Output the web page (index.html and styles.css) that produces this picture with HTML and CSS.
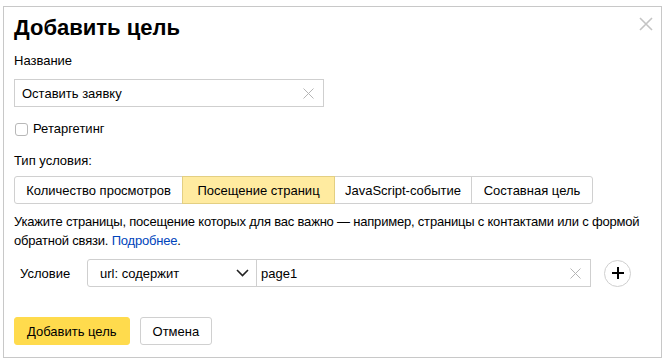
FILE: index.html
```html
<!DOCTYPE html>
<html lang="ru">
<head>
    <meta charset="UTF-8">
    <title>Добавить цель</title>
    <link rel="stylesheet" href="styles.css">
</head>
<body>
    <div class="dialog">
        <button class="close" type="button" aria-label="Закрыть">
            <svg width="14" height="14" viewBox="0 0 14 14"><path d="M1 1L13 13M13 1L1 13" stroke="#c4c4c4" stroke-width="1.6" fill="none"/></svg>
        </button>

        <h2 class="title">Добавить цель</h2>

        <div class="label">Название</div>
        <div class="textinput name-input">
            <span class="value">Оставить заявку</span>
            <svg class="clear" width="11" height="11" viewBox="0 0 11 11"><path d="M0.5 0.5L10.5 10.5M10.5 0.5L0.5 10.5" stroke="#b5b5b5" stroke-width="1" fill="none"/></svg>
        </div>

        <label class="check-row">
            <span class="checkbox"></span>
            <span>Ретаргетинг</span>
        </label>

        <div class="label type-label">Тип условия:</div>
        <div class="segments">
            <span class="seg seg-first">Количество просмотров</span>
            <span class="seg seg-active">Посещение страниц</span>
            <span class="seg">JavaScript-событие</span>
            <span class="seg seg-last">Составная цель</span>
        </div>

        <p class="hint">Укажите страницы, посещение которых для вас важно — например, страницы с контактами или с формой обратной связи. <a href="#">Подробнее</a>.</p>

        <div class="condition">
            <span class="cond-label">Условие</span>
            <div class="select">
                <span>url: содержит</span>
                <svg width="13" height="8" viewBox="0 0 13 8"><path d="M1 1L6.5 6.5L12 1" stroke="#222" stroke-width="1.6" fill="none"/></svg>
            </div>
            <div class="textinput cond-input">
                <span class="value">page1</span>
                <svg class="clear" width="11" height="11" viewBox="0 0 11 11"><path d="M0.5 0.5L10.5 10.5M10.5 0.5L0.5 10.5" stroke="#b5b5b5" stroke-width="1" fill="none"/></svg>
            </div>
            <button class="plus" type="button" aria-label="Добавить">
                <svg width="12" height="12" viewBox="0 0 12 12"><path d="M6 0V12M0 6H12" stroke="#000" stroke-width="2" fill="none"/></svg>
            </button>
        </div>

        <div class="footer">
            <button class="btn btn-action" type="button">Добавить цель</button>
            <button class="btn" type="button">Отмена</button>
        </div>
    </div>
</body>
</html>
```

FILE: styles.css
```css
body {
    margin: 0;
    padding: 6px 0 0 3px;
    font-family: 'Liberation Sans', Arial, sans-serif;
    font-size: 13px;
    color: #000;
    background: #fff;
}

.dialog {
    position: relative;
    box-sizing: border-box;
    width: 659px;
    height: 352px;
    border: 1px solid #c8c8c8;
    padding: 8px 8px 0 10px;
}

.close {
    position: absolute;
    top: 10px;
    right: 8px;
    width: 14px;
    height: 14px;
    padding: 0;
    border: 0;
    background: none;
    display: flex;
}

.title {
    margin: 0;
    font-size: 22px;
    line-height: 26px;
    font-weight: bold;
}

.label {
    margin-top: 12px;
    line-height: 16px;
}

.textinput {
    box-sizing: border-box;
    height: 28px;
    border: 1px solid #cfcfcf;
    display: flex;
    align-items: center;
    padding: 0 9px 0 7px;
}

.textinput .value {
    flex: 1;
}

.name-input {
    margin-top: 10px;
    width: 310px;
}

.check-row {
    margin-top: 14px;
    display: flex;
    align-items: center;
    gap: 5px;
    line-height: 16px;
    padding-left: 1px;
}

.checkbox {
    box-sizing: border-box;
    width: 13px;
    height: 13px;
    border: 1px solid #b8b8b8;
    border-radius: 3px;
}

.type-label {
    margin-top: 16px;
}

.segments {
    margin-top: 7px;
    display: flex;
    height: 28px;
}

.seg {
    box-sizing: border-box;
    height: 28px;
    display: flex;
    align-items: center;
    justify-content: center;
    border: 1px solid #d0d0d0;
    margin-left: -1px;
    white-space: nowrap;
}

.seg:nth-child(1) { width: 169px; margin-left: 0; }
.seg:nth-child(2) { width: 153px; }
.seg:nth-child(3) { width: 138px; }
.seg:nth-child(4) { width: 122px; }

.seg-first {
    border-radius: 3px 0 0 3px;
}

.seg-last {
    border-radius: 0 3px 3px 0;
}

.seg-active {
    background: #ffeba0;
    border-color: #e3cf82;
    position: relative;
}

.hint {
    margin: 8px 0 0;
    line-height: 19px;
    letter-spacing: -0.2px;
}

.hint a {
    color: #04b;
    text-decoration: none;
}

.condition {
    margin-top: 9px;
    display: flex;
    align-items: center;
    height: 28px;
}

.cond-label {
    flex: none;
    width: 73px;
    padding-left: 6px;
    box-sizing: border-box;
}

.select {
    flex: none;
    box-sizing: border-box;
    width: 170px;
    height: 28px;
    border: 1px solid #cfcfcf;
    border-radius: 3px 0 0 3px;
    display: flex;
    align-items: center;
    justify-content: space-between;
    padding: 0 7px 0 12px;
}

.cond-input {
    flex: none;
    width: 335px;
    margin-left: -1px;
    padding-left: 4px;
}

.plus {
    flex: none;
    margin-left: 13px;
    box-sizing: border-box;
    width: 27px;
    height: 27px;
    border: 1px solid #cfcfcf;
    border-radius: 50%;
    background: #fff;
    padding: 0;
    display: flex;
    align-items: center;
    justify-content: center;
}

.footer {
    margin-top: 30px;
    display: flex;
    gap: 10px;
}

.btn {
    box-sizing: border-box;
    height: 28px;
    padding: 0 12px;
    border: 1px solid #d0d0d0;
    border-radius: 3px;
    background: #fff;
    font-family: inherit;
    font-size: 13px;
    color: #000;
    white-space: nowrap;
}

.btn-action {
    border-color: #ffdb4d;
    background: #ffdb4d;
}
```
